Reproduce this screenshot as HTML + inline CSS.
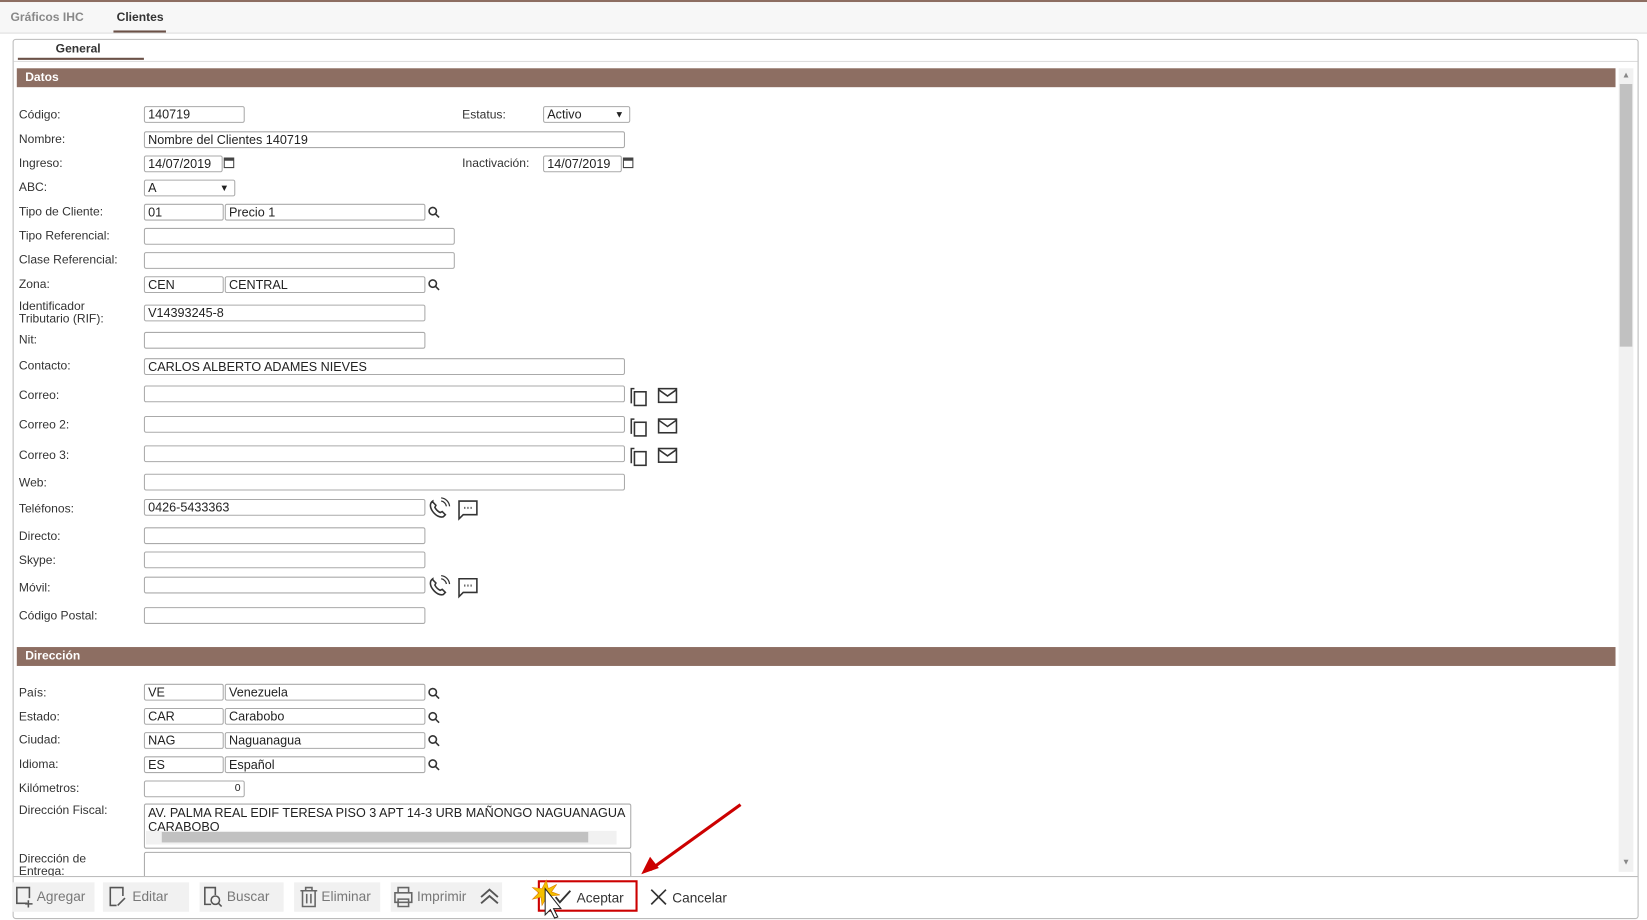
<!DOCTYPE html><html><head><meta charset="utf-8"><style>
html,body{margin:0;padding:0;background:#fff;overflow:hidden}
#w{position:absolute;left:0;top:0;width:1568px;height:876px;transform:scale(1.0504);transform-origin:0 0;font-family:"Liberation Sans",sans-serif;font-size:11.5px;color:#333}
.a{position:absolute}
.l{position:absolute;left:18px;line-height:13px}
.i{position:absolute;height:14px;border:1px solid #aaa;border-radius:2px;background:#fff;font-size:12px;line-height:14px;padding-left:3px;box-sizing:content-box;color:#222;white-space:nowrap;overflow:hidden}
.h{position:absolute;left:16px;width:1522px;height:18px;background:#8d6e62;color:#fff;font-weight:bold;font-size:11.5px;line-height:18px;padding-left:8px;box-sizing:border-box}
.btn{position:absolute;top:840px;height:28px;background:#f1f1f1;color:#777;font-size:13px;line-height:28px}
svg{position:absolute}
</style></head><body><div id="w">
<div class="a" style="left:0;top:0;width:1568px;height:2px;background:#8d6e62"></div>
<div class="a" style="left:0;top:2px;width:1568px;height:29px;background:#f7f7f7;border-bottom:1px solid #ddd"></div>
<div class="a" style="left:10px;top:11px;color:#888;font-weight:bold;font-size:11.5px">Gráficos IHC</div>
<div class="a" style="left:111px;top:11px;color:#333;font-weight:bold;font-size:11.5px">Clientes</div>
<div class="a" style="left:108px;top:29px;width:50px;height:2px;background:#6b5147"></div>
<div class="a" style="left:12px;top:37px;width:1548px;height:838px;border:1px solid #bbb;border-radius:3px;box-sizing:border-box"></div>
<div class="a" style="left:53px;top:41px;font-weight:bold;font-size:11.5px">General</div>
<div class="a" style="left:17px;top:55px;width:120px;height:2px;background:#6b5147"></div>
<div class="a" style="left:13px;top:58px;width:1546px;height:1px;background:#ddd"></div>
<div class="a" style="left:1541px;top:65px;width:14px;height:765px;background:#f1f1f1"></div>
<div class="a" style="left:1542px;top:80px;width:12px;height:250px;background:#c1c1c1"></div>
<div class="a" style="left:1544px;top:67px;font-size:8px;color:#888">▲</div>
<div class="a" style="left:1544px;top:816px;font-size:8px;color:#888">▼</div>
<div class="a" style="left:13px;top:834px;width:1546px;height:1px;background:#bbb"></div>
<div class="a" style="left:13px;top:59px;width:1527px;height:775px;overflow:hidden">
<div style="position:absolute;left:-13px;top:-59px;width:1568px;height:900px">
<div class="h" style="top:65px">Datos</div>
<div class="l" style="top:104px">Código:</div><div class="i" style="left:137px;top:101px;width:91px">140719</div>
<div class="a" style="left:440px;top:104px">Estatus:</div><div class="i" style="left:517px;top:101px;width:78px">Activo<span style="position:absolute;right:5px;font-size:9px">▼</span></div>
<div class="l" style="top:127px">Nombre:</div><div class="i" style="left:137px;top:125px;width:453px">Nombre del Clientes 140719</div>
<div class="l" style="top:150px">Ingreso:</div><div class="i" style="left:137px;top:148px;width:70px">14/07/2019</div>
<div class="a" style="left:213px;top:150px;width:10px;height:10px;border:1px solid #444;border-top:3px solid #444;box-sizing:border-box"></div>
<div class="a" style="left:440px;top:150px">Inactivación:</div><div class="i" style="left:517px;top:148px;width:70px">14/07/2019</div>
<div class="a" style="left:593px;top:150px;width:10px;height:10px;border:1px solid #444;border-top:3px solid #444;box-sizing:border-box"></div>
<div class="l" style="top:173px">ABC:</div><div class="i" style="left:137px;top:171px;width:82px">A<span style="position:absolute;right:5px;font-size:9px">▼</span></div>
<div class="l" style="top:196px">Tipo de Cliente:</div><div class="i" style="left:137px;top:194px;width:71px">01</div><div class="i" style="left:214px;top:194px;width:186px">Precio 1</div>
<div class="l" style="top:219px">Tipo Referencial:</div><div class="i" style="left:137px;top:217px;width:291px"></div>
<div class="l" style="top:242px">Clase Referencial:</div><div class="i" style="left:137px;top:240px;width:291px"></div>
<div class="l" style="top:265px">Zona:</div><div class="i" style="left:137px;top:263px;width:71px">CEN</div><div class="i" style="left:214px;top:263px;width:186px">CENTRAL</div>
<div class="l" style="top:286px;line-height:12px">Identificador<br>Tributario (RIF):</div><div class="i" style="left:137px;top:290px;width:263px">V14393245-8</div>
<div class="l" style="top:318px">Nit:</div><div class="i" style="left:137px;top:316px;width:263px"></div>
<div class="l" style="top:343px">Contacto:</div><div class="i" style="left:137px;top:341px;width:453px">CARLOS ALBERTO ADAMES NIEVES</div>
<div class="l" style="top:371px">Correo:</div><div class="i" style="left:137px;top:367px;width:453px"></div>
<div class="l" style="top:399px">Correo 2:</div><div class="i" style="left:137px;top:396px;width:453px"></div>
<div class="l" style="top:428px">Correo 3:</div><div class="i" style="left:137px;top:424px;width:453px"></div>
<div class="l" style="top:454px">Web:</div><div class="i" style="left:137px;top:451px;width:453px"></div>
<div class="l" style="top:479px">Teléfonos:</div><div class="i" style="left:137px;top:475px;width:263px">0426-5433363</div>
<div class="l" style="top:505px">Directo:</div><div class="i" style="left:137px;top:502px;width:263px"></div>
<div class="l" style="top:528px">Skype:</div><div class="i" style="left:137px;top:525px;width:263px"></div>
<div class="l" style="top:554px">Móvil:</div><div class="i" style="left:137px;top:549px;width:263px"></div>
<div class="l" style="top:581px">Código Postal:</div><div class="i" style="left:137px;top:578px;width:263px"></div>
<div class="h" style="top:616px">Dirección</div>
<div class="l" style="top:654px">País:</div><div class="i" style="left:137px;top:651px;width:71px">VE</div><div class="i" style="left:214px;top:651px;width:186px">Venezuela</div>
<div class="l" style="top:677px">Estado:</div><div class="i" style="left:137px;top:674px;width:71px">CAR</div><div class="i" style="left:214px;top:674px;width:186px">Carabobo</div>
<div class="l" style="top:699px">Ciudad:</div><div class="i" style="left:137px;top:697px;width:71px">NAG</div><div class="i" style="left:214px;top:697px;width:186px">Naguanagua</div>
<div class="l" style="top:722px">Idioma:</div><div class="i" style="left:137px;top:720px;width:71px">ES</div><div class="i" style="left:214px;top:720px;width:186px">Español</div>
<div class="l" style="top:745px">Kilómetros:</div><div class="i" style="left:137px;top:743px;width:91px;text-align:right;padding-right:3px;width:88px;font-size:10px">0</div>
<div class="l" style="top:766px">Dirección Fiscal:</div>
<div class="i" style="left:137px;top:765px;width:459px;height:39px;line-height:13px;padding-top:2px;white-space:normal">AV. PALMA REAL EDIF TERESA PISO 3 APT 14-3 URB MAÑONGO NAGUANAGUA CARABOBO
<div class="a" style="left:1px;top:25px;width:448px;height:13px;background:#f1f1f1"></div>
<div class="a" style="left:16px;top:26px;width:406px;height:10px;background:#c1c1c1"></div></div>
<div class="l" style="top:812px;line-height:12px">Dirección de<br>Entrega:</div>
<div class="i" style="left:137px;top:811px;width:459px;height:30px"></div>
</div></div>
<!-- icons -->
<svg width="1568" height="876" style="left:0;top:0" fill="none" stroke="#333" stroke-width="1.5">
<g id="s"><circle cx="412" cy="201" r="3.5"/><path d="M414.5 203.5l3.5 3.5"/></g>
<use href="#s" y="69"/><use href="#s" y="458"/><use href="#s" y="481"/><use href="#s" y="503"/><use href="#s" y="526"/>
<g id="c"><path d="M601 384v-14h3"/><rect x="604" y="373" width="11" height="13"/><rect x="627" y="370" width="17" height="13"/><path d="M627 371l8.5 6 8.5-6"/></g>
<use href="#c" y="29"/><use href="#c" y="57"/>
<g id="p"><path d="M412 477c-3 2-3 6 0 10s7 6 10 5l2-2-3-3-2 1c-2-1-4-3-5-5l1-2-3-3z"/><path d="M420 477a6 6 0 0 1 5 5M420 474a9 9 0 0 1 8 8" stroke-width="1.2"/><path d="M437 477h17v13h-13l-4 4z"/><path d="M442 483.5h1M445 483.5h1M448 483.5h1" stroke-width="2"/></g>
<use href="#p" y="74"/>
<path d="M705 766L619 828" stroke="#c00" stroke-width="3"/><path d="M612 831l7-14 7 9z" fill="#c00" stroke="#c00"/>
</svg>
<div class="btn" style="left:12px;width:78px"><svg width="20" height="22" style="left:2px;top:3px" fill="none" stroke="#555" stroke-width="1.5"><path d="M12 17H2V2h12v10M13 14v7M10 17.5h7"/></svg><span style="position:absolute;left:23px">Agregar</span></div>
<div class="btn" style="left:98px;width:82px"><svg width="20" height="22" style="left:5px;top:3px" fill="none" stroke="#555" stroke-width="1.5"><path d="M8 19H2V2h12v8M9 19l7-7"/></svg><span style="position:absolute;left:28px">Editar</span></div>
<div class="btn" style="left:190px;width:80px"><svg width="20" height="22" style="left:3px;top:3px" fill="none" stroke="#555" stroke-width="1.5"><path d="M8 18H2V2h10v7"/><circle cx="12" cy="14" r="4"/><path d="M15 17l3 3"/></svg><span style="position:absolute;left:26px">Buscar</span></div>
<div class="btn" style="left:280px;width:82px"><svg width="20" height="22" style="left:4px;top:3px" fill="none" stroke="#666" stroke-width="1.5"><path d="M2 5h16M7 5V2h6v3M4 5v15h12V5M8 8v9M12 8v9"/></svg><span style="position:absolute;left:26px">Eliminar</span></div>
<div class="btn" style="left:372px;width:106px"><svg width="20" height="22" style="left:2px;top:3px" fill="none" stroke="#666" stroke-width="1.5"><path d="M5 7V2h10v5M2 7h16v9H2zM5 13h10v7H5z"/></svg><span style="position:absolute;left:25px">Imprimir</span><svg width="22" height="22" style="left:83px;top:3px" fill="none" stroke="#555" stroke-width="1.8"><path d="M3 11l8-7 8 7M3 17l8-7 8 7"/></svg></div>
<div class="a" style="left:512px;top:838px;width:95px;height:30px;border:2px solid #c00;box-sizing:border-box"></div>
<svg width="30" height="40" style="left:505px;top:836px"><path d="M15 2l2 8 8-4-5 7 8 3-9 1 3 8-7-6-4 7-1-8-8 2 6-6-6-5 9 1z" fill="#f3c000" stroke="#e08000" stroke-width=".6"/><path d="M14 10v25l5-5 4 8 3-1-4-8h7z" fill="#fff" stroke="#222" stroke-width="1"/></svg>
<svg width="16" height="14" style="left:528px;top:847px" fill="none" stroke="#333" stroke-width="1.8"><path d="M1 7l4 5 10-11"/></svg>
<div class="a" style="left:549px;top:847px;font-size:13px;color:#333">Aceptar</div>
<svg width="16" height="16" style="left:619px;top:846px" fill="none" stroke="#333" stroke-width="1.6"><path d="M1 1l14 14M15 1L1 15"/></svg>
<div class="a" style="left:640px;top:847px;font-size:13px;color:#333">Cancelar</div>
</div></body></html>
